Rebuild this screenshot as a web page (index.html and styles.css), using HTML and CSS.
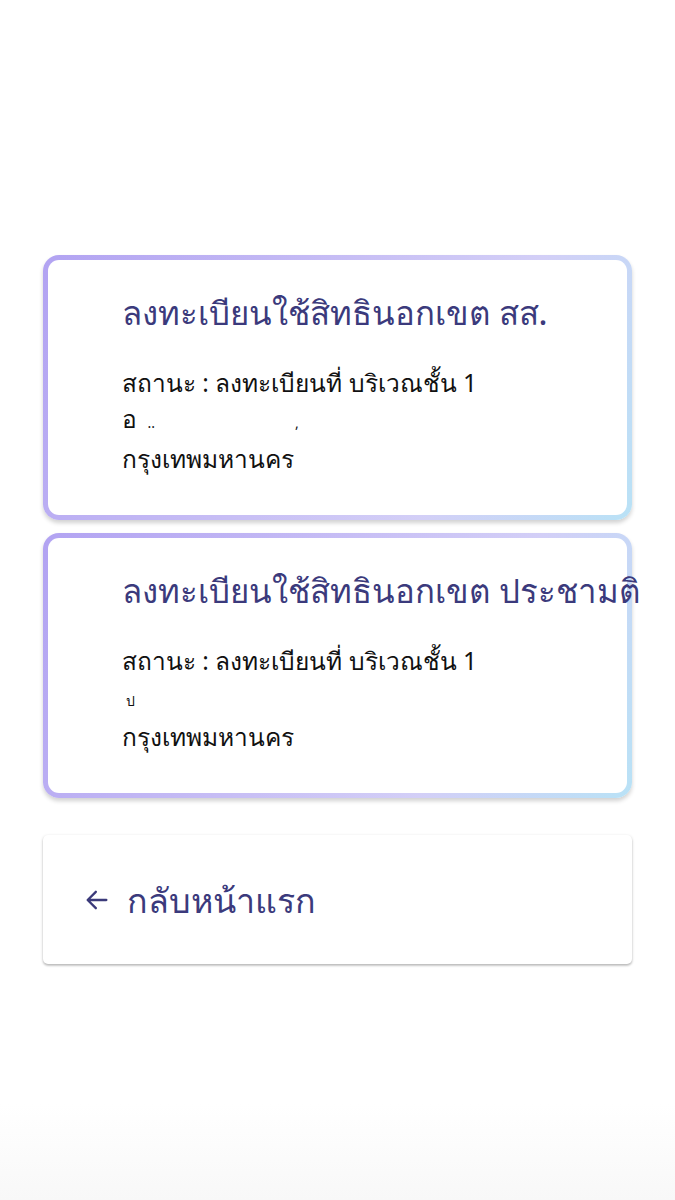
FILE: index.html
```html
<!DOCTYPE html>
<html lang="th">
<head>
<meta charset="utf-8">
<link rel="stylesheet" href="styles.css">
</head>
<body>
<main class="page">
  <section class="card">
    <h2 class="card-title">ลงทะเบียนใช้สิทธินอกเขต สส.</h2>
    <div class="card-body">
      <p class="line">สถานะ : ลงทะเบียนที่ บริเวณชั้น 1</p>
      <p class="line redacted">อ <span class="frag">..</span><span class="frag f2">,</span></p>
      <p class="line">กรุงเทพมหานคร</p>
    </div>
  </section>
  <section class="card">
    <h2 class="card-title">ลงทะเบียนใช้สิทธินอกเขต ประชามติ</h2>
    <div class="card-body">
      <p class="line">สถานะ : ลงทะเบียนที่ บริเวณชั้น 1</p>
      <p class="line redacted"><span class="frag">ป</span></p>
      <p class="line">กรุงเทพมหานคร</p>
    </div>
  </section>
  <a class="back" href="#">
    <svg class="back-icon" viewBox="0 0 24 24" width="28" height="28"><path d="M20 12H5M11 5l-7 7 7 7" fill="none" stroke="#3b3a7a" stroke-width="2" stroke-linecap="round" stroke-linejoin="round"/></svg>
    <span class="back-text">กลับหน้าแรก</span>
  </a>
</main>
</body>
</html>
```

FILE: styles.css
```css
html, body {
  margin: 0;
  padding: 0;
  background: #ffffff;
}
body {
  min-height: 1200px;
  background: linear-gradient(to bottom, #ffffff 0%, #ffffff 92%, #f8f8f8 100%);
  font-family: "Noto Sans", "Liberation Sans", sans-serif;
}
.page {
  padding: 255px 43px 0 43px;
  display: flex;
  flex-direction: column;
  gap: 13px;
}
.card {
  height: 265px;
  box-sizing: border-box;
  border: 5px solid transparent;
  border-radius: 16px;
  background:
    linear-gradient(#fff, #fff) padding-box,
    linear-gradient(115deg, #b2a3f2 0%, #c8bff5 45%, #d3cff7 70%, #b9e2f6 100%) border-box;
  box-shadow: 0 3px 4px rgba(0, 0, 0, 0.18);
  padding: 33px 0 0 74px;
  overflow: visible;
}
.card-title {
  margin: 0;
  font-size: 33px;
  font-weight: 500;
  line-height: 40px;
  color: #3b3a7c;
  white-space: nowrap;
}
.card-body {
  margin-top: 31px;
}
.line {
  margin: 0;
  font-size: 24.5px;
  line-height: 38px;
  color: #111;
  height: 38px;
  white-space: nowrap;
}
.redacted {
  line-height: 34px;
  height: 38px;
  overflow: hidden;
}
.frag {
  font-size: 14px;
  margin-left: 4px;
}
.f2 {
  margin-left: 140px;
}
.back {
  margin-top: 24px;
  height: 129px;
  box-sizing: border-box;
  display: flex;
  align-items: center;
  gap: 16px;
  padding: 0 0 0 40px;
  background: #fff;
  border-radius: 5px;
  box-shadow: 0 1px 3px rgba(0, 0, 0, 0.22), 0 2px 2px rgba(0, 0, 0, 0.12);
  text-decoration: none;
}
.back-icon {
  flex: none;
}
.back-text {
  font-size: 34px;
  font-weight: 500;
  color: #3b3a7c;
  line-height: 40px;
}
```
